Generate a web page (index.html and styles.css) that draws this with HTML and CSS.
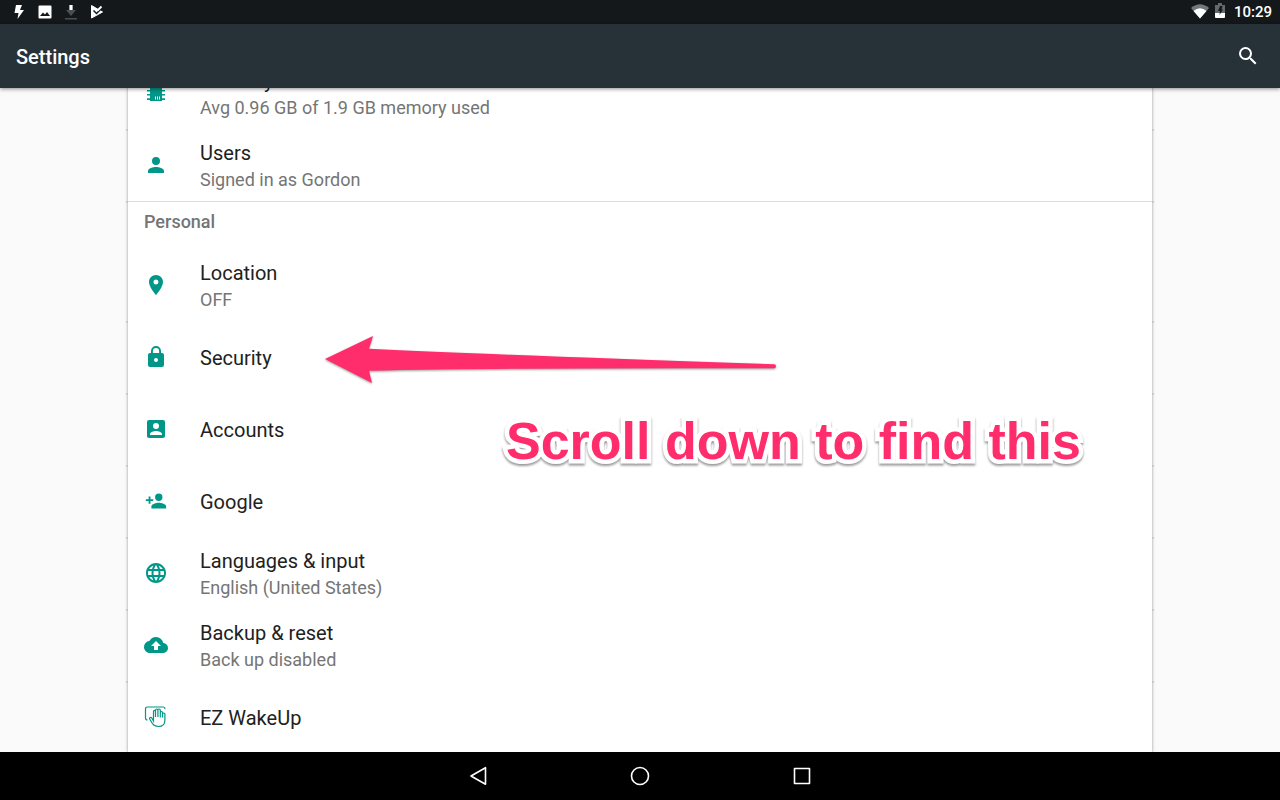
FILE: index.html
```html
<!DOCTYPE html>
<html lang="en">
<head>
<meta charset="utf-8">
<meta name="viewport" content="width=device-width, initial-scale=1">
<title>Settings</title>
<link rel="stylesheet" href="styles.css">
</head>
<body>
<div class="status-bar">
  <div class="notifications">
    <svg width="14" height="24" viewBox="0 0 14 24" fill="#fff"><path d="M4 5h6L8 10h4L5.500 19l1-6H2.500z"/></svg>
    <svg width="14" height="24" viewBox="0 0 14 24" fill="#fff"><path fill-rule="evenodd" d="M1.500 5.500h11q1 0 1 1v11q0 1-1 1h-11q-1 0-1-1v-11q0-1 1-1zM2 16h10l-3-4-2 2.500-2-2z"/></svg>
    <svg width="14" height="24" viewBox="0 0 14 24"><path fill="#4a4e51" d="M5 5h4v5h3l-5 6-5-6h3zM1 18h12v1.500H1z"/><path fill="#fff" d="M5.500 5h3v5h-3z"/></svg>
    <svg width="14" height="24" viewBox="0 0 14 24"><path fill="#fff" stroke="#fff" stroke-linejoin="round" d="M1.500 5.500 12.500 12 1.500 18z"/><path fill="none" stroke="#14181b" stroke-width="1.500" d="M3.500 10.500 6.500 13.500 12.500 7.500"/><path fill="none" stroke="#fff" stroke-width="2" d="M7.500 10.500 11.500 6.500"/></svg>
  </div>
  <div class="indicators">
    <svg width="18" height="24" viewBox="0 0 18 24"><path fill="#73777a" d="M0 8Q9 .5 18 8L9 18.500z"/><path fill="#fff" d="M2.500 11Q9 5.500 15.500 11L9 18.500z"/></svg>
    <svg width="10" height="24" viewBox="0 0 10 24"><path fill="#65696c" d="M3 3h4v2h3v8H0V5h3z"/><path fill="#fff" d="M0 13h10v4q0 1-1 1H1q-1 0-1-1z"/><path fill="#14181b" d="M5 6h2.500L6.500 9.500H8L4.500 15l.5-4H3z"/></svg>
    <time>10:29</time>
  </div>
</div>
<header class="app-bar">
  <h1>Settings</h1>
  <button class="search" aria-label="Search"><svg width="24" height="24" viewBox="0 0 24 24" fill="#fff"><path d="M15.500 14h-.79l-.28-.27A6.471 6.471 0 0 0 16 9.500 6.500 6.500 0 1 0 9.500 16c1.610 0 3.090-.59 4.230-1.570l.27.28v.79l5 4.990L20.490 19l-4.990-5zm-6 0C7.010 14 5 11.990 5 9.500S7.010 5 9.500 5 14 7.010 14 9.500 11.990 14 9.500 14z"/></svg></button>
</header>
<main class="content">
  <div class="panel">
    <a class="row" href="#memory">
      <svg class="icon" viewBox="0 0 24 24"><path d="M6 3h12v17H6zM3 5h18v1.500H3zM3 9h18v1.500H3zM3 13h18v1.500H3zM3 17.300h18V19H3z"/><path fill="#fff" d="M11 15.500h1v3h-1zM13 15.500h1v3h-1zM15 15.500h1v3h-1z"/></svg>
      <span class="text"><span class="title">Memory</span><span class="summary">Avg 0.96 GB of 1.9 GB memory used</span></span>
    </a>
    <a class="row" href="#users">
      <svg class="icon" viewBox="0 0 24 24"><path d="M12 12a4 4 0 1 0 0-8 4 4 0 0 0 0 8zm0 2c-2.670 0-8 1.340-8 4v2h16v-2c0-2.660-5.330-4-8-4z"/></svg>
      <span class="text"><span class="title">Users</span><span class="summary">Signed in as Gordon</span></span>
    </a>
    <h2 class="section">Personal</h2>
    <a class="row" href="#location">
      <svg class="icon" viewBox="0 0 24 24"><path d="M12 2C8.130 2 5 5.130 5 9c0 5.250 7 13 7 13s7-7.750 7-13c0-3.870-3.130-7-7-7zm0 9.500a2.500 2.500 0 1 1 0-5 2.500 2.500 0 0 1 0 5z"/></svg>
      <span class="text"><span class="title">Location</span><span class="summary">OFF</span></span>
    </a>
    <a class="row" href="#security">
      <svg class="icon" viewBox="0 0 24 24"><path d="M18 8h-1V6A5 5 0 0 0 7 6v2H6a2 2 0 0 0-2 2v10c0 1.100.9 2 2 2h12a2 2 0 0 0 2-2V10a2 2 0 0 0-2-2zm-6 9a2 2 0 1 1 0-4 2 2 0 0 1 0 4zm3.100-9H8.900V6a3.100 3.100 0 0 1 6.200 0z"/></svg>
      <span class="text"><span class="title">Security</span></span>
    </a>
    <a class="row" href="#accounts">
      <svg class="icon" viewBox="0 0 24 24"><path d="M3 5v14c0 1.100.89 2 2 2h14c1.100 0 2-.9 2-2V5a2 2 0 0 0-2-2H5a2 2 0 0 0-2 2zm12 4a3 3 0 1 1-6 0 3 3 0 0 1 6 0zm-9 8c0-2 4-3.100 6-3.100s6 1.100 6 3.100v1H6z"/></svg>
      <span class="text"><span class="title">Accounts</span></span>
    </a>
    <a class="row" href="#google">
      <svg class="icon" viewBox="-1 -1 26 26"><path d="M15 12a4 4 0 1 0 0-8 4 4 0 0 0 0 8zm-9-2V7H4v3H1v2h3v3h2v-3h3v-2zm9 4c-2.670 0-8 1.340-8 4v2h16v-2c0-2.660-5.330-4-8-4z"/></svg>
      <span class="text"><span class="title">Google</span></span>
    </a>
    <a class="row" href="#languages">
      <svg class="icon" viewBox="0 0 24 24"><path d="M11.990 2C6.470 2 2 6.480 2 12s4.470 10 9.990 10C17.520 22 22 17.520 22 12S17.520 2 11.990 2zm6.930 6h-2.950a15.650 15.650 0 0 0-1.380-3.560A8.030 8.030 0 0 1 18.920 8zM12 4.040c.83 1.200 1.480 2.530 1.910 3.960h-3.820c.43-1.430 1.080-2.760 1.910-3.960zM4.260 14C4.100 13.360 4 12.690 4 12s.1-1.360.26-2h3.380a16.500 16.500 0 0 0 0 4zm.82 2h2.950c.32 1.250.78 2.450 1.380 3.560A7.990 7.990 0 0 1 5.080 16zm2.950-8H5.080a7.990 7.990 0 0 1 4.330-3.560A15.650 15.650 0 0 0 8.030 8zM12 19.960A14.100 14.100 0 0 1 10.090 16h3.820A14.100 14.100 0 0 1 12 19.960zM14.340 14H9.660a14.700 14.700 0 0 1 0-4h4.680a14.700 14.700 0 0 1 0 4zm.25 5.560c.6-1.110 1.060-2.310 1.380-3.560h2.950a8.030 8.030 0 0 1-4.330 3.560zM16.360 14a16.500 16.500 0 0 0 0-4h3.380c.16.640.26 1.310.26 2s-.1 1.360-.26 2z"/></svg>
      <span class="text"><span class="title">Languages &amp; input</span><span class="summary">English (United States)</span></span>
    </a>
    <a class="row" href="#backup">
      <svg class="icon" viewBox="0 0 24 24"><path d="M19.350 10.040A7.490 7.490 0 0 0 12 4C9.110 4 6.600 5.640 5.350 8.040A5.994 5.994 0 0 0 0 14c0 3.310 2.690 6 6 6h13c2.760 0 5-2.240 5-5 0-2.640-2.050-4.780-4.650-4.960zM14 13v4h-4v-4H7l5-5 5 5z"/></svg>
      <span class="text"><span class="title">Backup &amp; reset</span><span class="summary">Back up disabled</span></span>
    </a>
    <a class="row" href="#wakeup">
      <svg class="icon line" viewBox="0 0 24 24"><path d="M3.500 15q-2 0-2-2V4q0-2 2-2h16q1.500 0 1.500 2"/><path d="M9.500 16V6.500q0-1.200 1-1.200t1 1.200V12V5.200q0-1.200 1.200-1.200t1.200 1.200V12V5.200q0-1.200 1.200-1.200t1.200 1.200V12.500V7.500q0-1 1.100-1t1.100 1V12.500V9q0-1 1.200-1t1.200 1V15q0 6.500-6.500 6.500-4 0-6-3L5.700 14q-.5-1 .4-1.400t1.700.4z"/></svg>
      <span class="text"><span class="title">EZ WakeUp</span></span>
    </a>
  </div>
</main>
<nav class="nav-bar">
  <button aria-label="Back"><svg width="24" height="24" viewBox="0 0 24 24"><path d="M19.500 3.700v16.600L5 12z"/></svg></button>
  <button aria-label="Home"><svg width="24" height="24" viewBox="0 0 24 24"><circle cx="12" cy="12" r="8.500"/></svg></button>
  <button aria-label="Overview"><svg width="24" height="24" viewBox="0 0 24 24"><rect x="4.500" y="4.500" width="15" height="15"/></svg></button>
</nav>
<svg class="arrow" width="460" height="56" viewBox="320 332 460 56" aria-hidden="true"><path d="M325 359 373 336 369 348.700Q500 355 774 364.200 776 364.300 776 366.300T774 368.300Q520 367.500 369 370.700L372 383z"/></svg>
<p class="callout">Scroll down to find this</p>
</body>
</html>
```

FILE: styles.css
```css
* { box-sizing: border-box; }

body {
  margin: 0;
  height: 100vh;
  display: flex;
  flex-direction: column;
  position: relative;
  overflow: hidden;
  background: #fafafa;
  color: #212121;
  font-family: Roboto, sans-serif;
}

svg { display: block; flex: none; }

button {
  padding: 0;
  border: 0;
  background: none;
  cursor: pointer;
}

.status-bar {
  flex: none;
  height: 24px;
  padding: 0 8px 0 12px;
  display: flex;
  justify-content: space-between;
  background: #14181b;
  color: #fff;
}

.notifications { display: flex; gap: 12px; }

.indicators {
  display: flex;
  align-items: center;
  gap: 6px;
}

.indicators time {
  padding-left: 3px;
  font-size: 15px;
  line-height: 24px;
  font-weight: 500;
}

.app-bar {
  flex: none;
  height: 64px;
  padding: 0 20px 0 16px;
  display: flex;
  align-items: center;
  justify-content: space-between;
  position: relative;
  z-index: 1;
  background: #273238;
  color: #fff;
  box-shadow: 0 1px 4px rgba(0, 0, 0, .45);
}

.app-bar h1 {
  margin: 0;
  padding-top: 2px;
  font-size: 20px;
  line-height: 24px;
  font-weight: 500;
}

.content {
  flex: 1;
  min-height: 0;
  overflow: hidden;
  padding: 0 10%;
}

.panel {
  margin-top: -31px;
  background: #fff;
  box-shadow: 0 0 3px rgba(0, 0, 0, .4);
}

.row {
  height: 72px;
  padding: 0 16px;
  display: flex;
  align-items: center;
  gap: 32px;
  position: relative;
  color: inherit;
  text-decoration: none;
}

.row::before,
.row::after {
  content: "";
  position: absolute;
  bottom: -2px;
  width: 2px;
  height: 2px;
  background: #c8c8c8;
}

.row::before { left: -2px; }
.row::after { right: -2px; }

.icon {
  width: 24px;
  height: 24px;
  fill: #009688;
}

.line {
  fill: none;
  stroke: #009688;
  stroke-width: 1.2;
}

.text {
  display: flex;
  flex-direction: column;
  padding-top: 2px;
}

.title {
  font-size: 20px;
  line-height: 28px;
}

.summary {
  color: #757575;
  font-size: 18px;
  line-height: 26px;
}

.section {
  margin: 0;
  height: 48px;
  padding: 0 16px;
  border-top: 1px solid #dcdcdc;
  color: #757575;
  font-size: 18px;
  line-height: 40px;
  font-weight: 500;
}

.nav-bar {
  flex: none;
  height: 48px;
  display: flex;
  justify-content: center;
  position: relative;
  background: #000;
}

.nav-bar button {
  width: 162px;
  display: flex;
  align-items: center;
  justify-content: center;
}

.nav-bar svg {
  fill: none;
  stroke: #fff;
  stroke-width: 1.6;
  stroke-linejoin: round;
}

.arrow {
  position: absolute;
  left: 320px;
  top: 332px;
  fill: #ff2d6c;
  filter: drop-shadow(0 1px 1px rgba(0, 0, 0, .4));
  pointer-events: none;
}

.callout {
  position: absolute;
  left: 506px;
  top: 411px;
  margin: 0;
  color: #ff2d6c;
  font: bold 52px/60px "Liberation Sans", sans-serif;
  white-space: nowrap;
  -webkit-text-stroke: 9px #fff;
  paint-order: stroke fill;
  stroke-linejoin: round;
  filter: drop-shadow(0 2px 1px rgba(0, 0, 0, .4));
  pointer-events: none;
}
```
